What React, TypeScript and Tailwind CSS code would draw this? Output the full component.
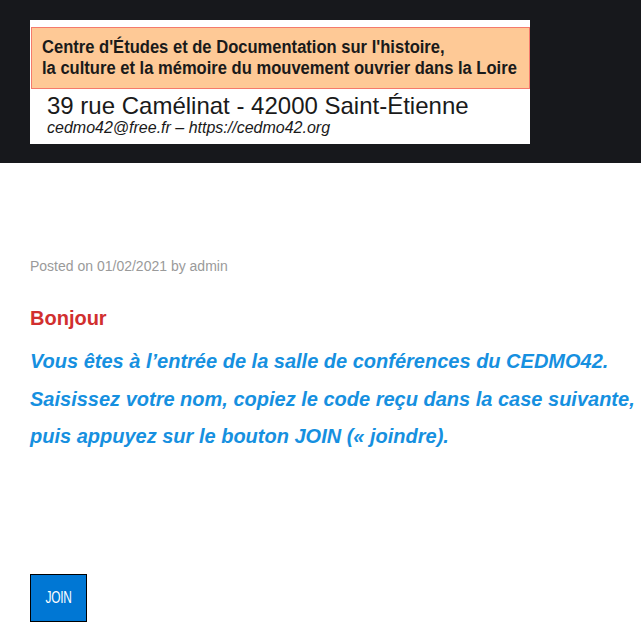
export default function App() {
  return (
    <div className="min-h-[638px] bg-white font-['Liberation_Sans',Arial,sans-serif]">
      {/* Header with logo banner */}
      <header className="h-[163px] bg-[#17181c] pt-5 pl-[30px]">
        <div className="flex h-[124px] w-[500px] flex-col bg-white pt-[7px]">
          <div className="ml-px flex h-[62px] flex-col justify-center overflow-hidden border border-[#f47a6c] bg-[#fec996] pl-[10px] text-[18px] font-bold leading-[21px] text-[#1a1a1a]">
            <p className="origin-left scale-x-[0.92] whitespace-nowrap">Centre d'Études et de Documentation sur l'histoire,</p>
            <p className="origin-left scale-x-[0.92] whitespace-nowrap">la culture et la mémoire du mouvement ouvrier dans la Loire</p>
          </div>
          <div className="pl-[17px] pt-[3px] text-[#1a1a1a]">
            <p className="text-[24px] leading-[27px]">39 rue Camélinat - 42000 Saint-Étienne</p>
            <p className="text-[16px] italic leading-[18px]">cedmo42@free.fr – https://cedmo42.org</p>
          </div>
        </div>
      </header>

      {/* Post */}
      <main className="px-[30px] pt-[95px]">
        <p className="text-[14px] leading-4 text-[#9a9a9a]">Posted on 01/02/2021 by admin</p>

        <h2 className="mt-[32px] text-[20px] font-bold leading-6 text-[#d12f2f]">Bonjour</h2>

        <div className="mt-[13px] whitespace-nowrap text-[20px] font-bold italic leading-[37.5px] text-[#1690e0]">
          <p>Vous êtes à l’entrée de la salle de conférences du CEDMO42.</p>
          <p>Saisissez votre nom, copiez le code reçu dans la case suivante,</p>
          <p>puis appuyez sur le bouton JOIN (« joindre).</p>
        </div>

        <button className="mt-[118px] flex h-[48px] w-[57px] items-center justify-center border border-black bg-[#0077d4] text-[17px] text-white">
          <span className="scale-x-[0.7] tracking-tight">JOIN</span>
        </button>
      </main>
    </div>
  );
}
